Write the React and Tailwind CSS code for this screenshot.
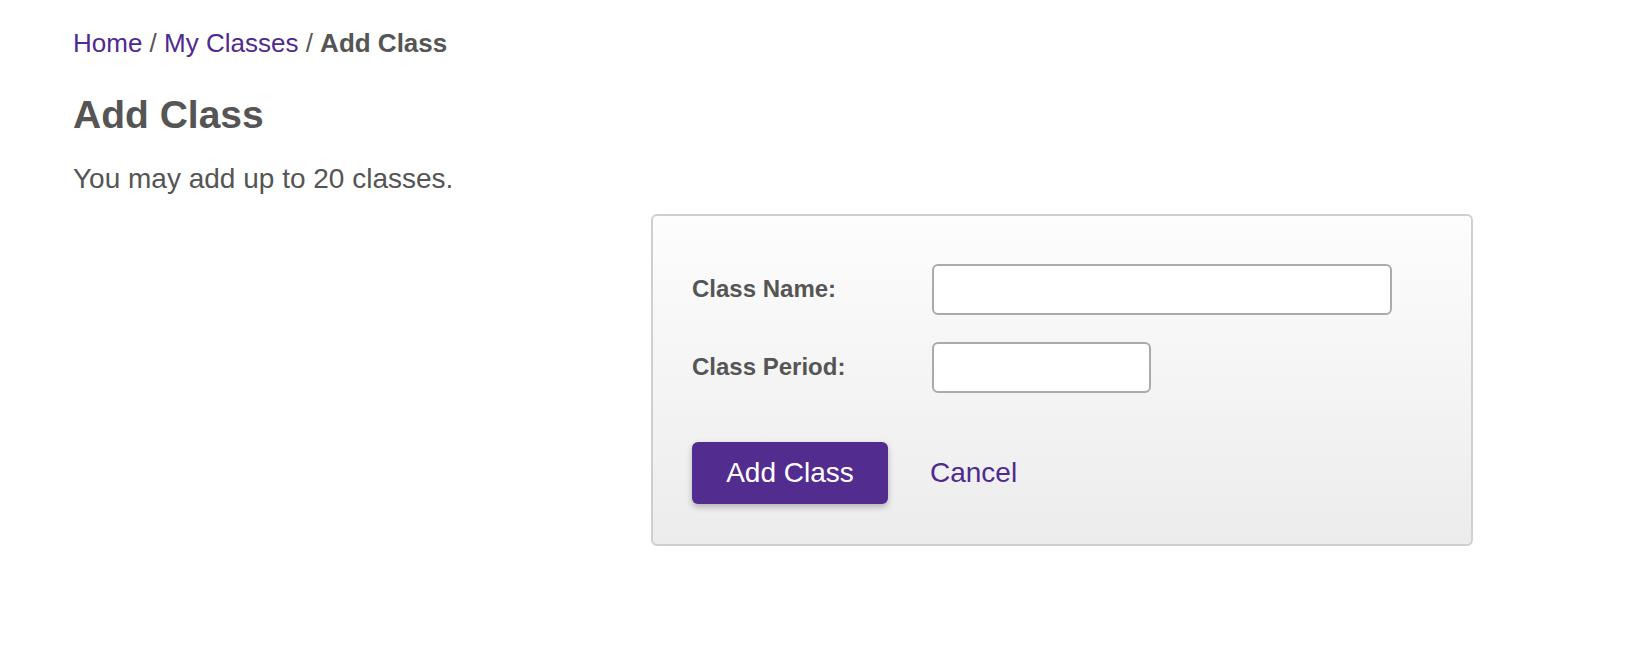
export default function App() {
  return (
    <div
      className="min-h-screen bg-white text-[#555555] pl-[73px] pt-[27px]"
      style={{ fontFamily: '"Liberation Sans", Arial, sans-serif' }}
    >
      {/* Breadcrumb */}
      <nav className="text-[26px] leading-[32px]">
        <a href="#" className="text-[#4f2a90]">
          Home
        </a>{" "}
        /{" "}
        <a href="#" className="text-[#4f2a90]">
          My Classes
        </a>{" "}
        / <span className="font-bold">Add Class</span>
      </nav>

      <h1 className="mt-[32px] text-[39px] leading-[48px] font-bold">Add Class</h1>

      <p className="mt-[23px] text-[28px] leading-[34px]">
        You may add up to 20 classes.
      </p>

      {/* Form card */}
      <div className="mt-[18px] ml-[578px] w-[822px] rounded-[6px] border-2 border-[#cfcfcf] bg-gradient-to-b from-[#fdfdfd] to-[#ececec] pl-[39px] pt-[48px] pb-[40px]">
        <div className="flex items-center">
          <label className="w-[240px] text-[24px] font-bold -translate-y-[1px]">Class Name:</label>
          <input
            type="text"
            className="h-[51px] w-[460px] rounded-[6px] border-2 border-[#aaaaaa] bg-white px-3 outline-none"
          />
        </div>
        <div className="mt-[27px] flex items-center">
          <label className="w-[240px] text-[24px] font-bold -translate-y-[1px]">Class Period:</label>
          <input
            type="text"
            className="h-[51px] w-[219px] rounded-[6px] border-2 border-[#aaaaaa] bg-white px-3 outline-none"
          />
        </div>

        <div className="mt-[49px] flex items-center">
          <button className="h-[62px] w-[196px] rounded-[6px] bg-[#522d8f] text-[28px] text-white shadow-[0_3px_6px_rgba(0,0,0,0.25)]">
            Add Class
          </button>
          <a href="#" className="ml-[42px] text-[28px] text-[#4f2a90]">
            Cancel
          </a>
        </div>
      </div>
    </div>
  );
}
